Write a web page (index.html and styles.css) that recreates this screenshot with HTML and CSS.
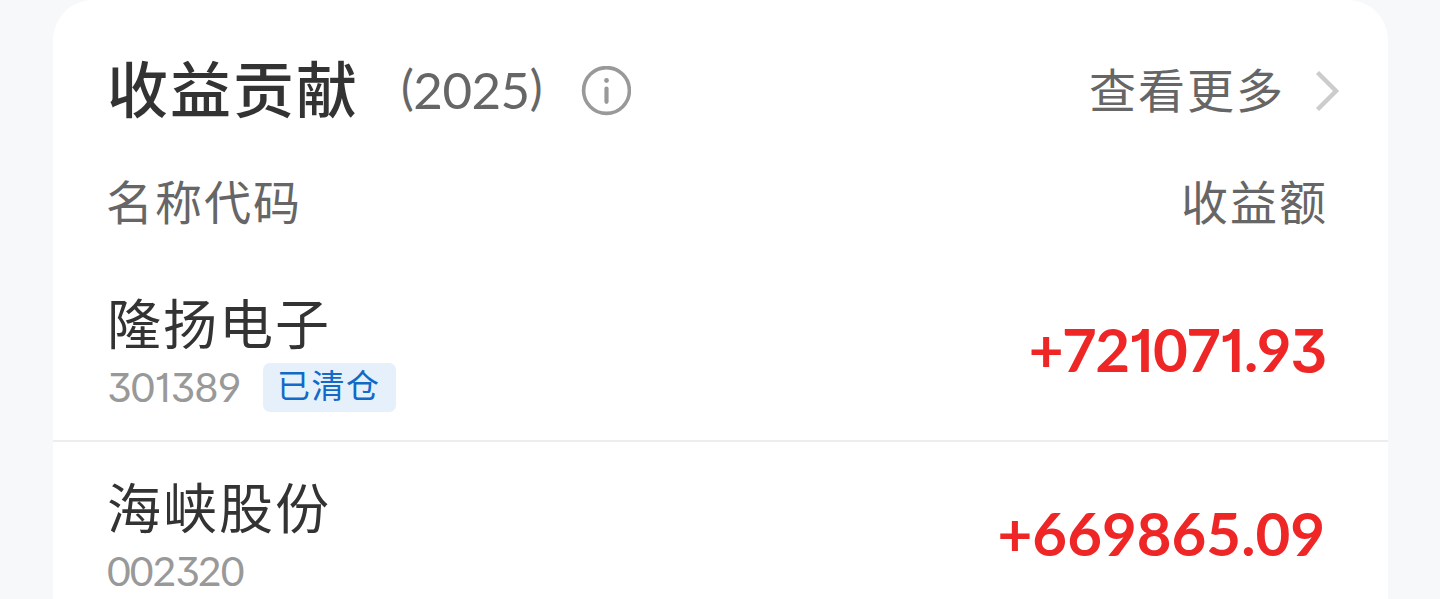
FILE: index.html
```
<!DOCTYPE html>
<html lang="zh-CN">
<head>
<meta charset="utf-8">
<title>收益贡献</title>
<link rel="stylesheet" href="styles.css">
</head>
<body>
<main class="card">
  <header class="head">
    <h1 class="title">收益贡献</h1>
    <span class="year"><span class="paren">(</span>2025<span class="paren">)</span></span>
    <svg class="info" viewBox="0 0 50 50" width="50" height="50" fill="none" stroke="#999" aria-hidden="true">
      <circle cx="25.5" cy="24.5" r="22.9" stroke-width="3.6"/>
      <path d="M25.500 22.5V35.800" stroke-width="4.2" stroke-linecap="round"/>
      <circle cx="25.5" cy="14.5" r="2.4" fill="#999" stroke="none"/>
    </svg>
    <a class="more">查看更多</a>
    <svg class="chevron" viewBox="0 0 26 42" width="26" height="42" fill="none" stroke="#ccc" stroke-width="4.5" aria-hidden="true">
      <path d="M2.500 2.500L21 21L2.500 39.500"/>
    </svg>
  </header>
  <div class="columns"><span>名称代码</span><span>收益额</span></div>
  <section class="row">
    <div class="stock">
      <div class="name">隆扬电子</div>
      <div class="meta"><span class="code code-narrow"><span class="flat">3</span>0<span class="one">1</span><span class="flat">3</span>89</span><span class="badge">已清仓</span></div>
    </div>
    <div class="amount">+72<span class="one">1</span>07<span class="one">1</span>.9<span class="flat">3</span></div>
  </section>
  <section class="row">
    <div class="stock">
      <div class="name">海峡股份</div>
      <div class="meta"><span class="code">002<span class="flat">3</span>20</span></div>
    </div>
    <div class="amount amount-wide">+669865.09</div>
  </section>
</main>
</body>
</html>
```
FILE: styles.css
```
* { box-sizing: border-box; }
body {
  margin: 0;
  background: #f7f8fa;
  font-family: Lato, "Noto Sans CJK SC", sans-serif;
  color: #333;
}
.card {
  width: 1335px;
  height: 599px;
  margin-left: 53px;
  overflow: hidden;
  background: #fff;
  border-radius: 40px 40px 0 0;
}
.head {
  display: flex;
  align-items: center;
  height: 181px;
  padding: 0 47px 0 54px;
  white-space: nowrap;
}
.title {
  margin: 0;
  width: 292px;
  padding-bottom: 1px;
  font-size: 61px;
  font-weight: 500;
  line-height: 80px;
  letter-spacing: 2px;
}
.year {
  width: 182px;
  padding: 0 0 1px 2px;
  font-size: 51px;
  line-height: 64px;
  letter-spacing: -0.500px;
  color: #666;
}
.paren { font-size: 48px; vertical-align: 4px; line-height: 1; }
.info { flex: none; }
.more {
  margin-left: auto;
  padding-bottom: 1px;
  font-size: 47px;
  line-height: 64px;
  letter-spacing: 2px;
  color: #666;
}
.chevron { flex: none; margin-left: 30px; }
.columns {
  display: flex;
  align-items: center;
  justify-content: space-between;
  height: 44px;
  padding: 0 60px 0 53px;
  font-size: 47px;
  line-height: 42px;
  letter-spacing: 2px;
  color: #666;
}
.columns span { padding-bottom: 2px; }
.row {
  display: flex;
  align-items: center;
  justify-content: space-between;
  height: 184px;
  padding: 0 64px 0 54px;
  border-bottom: 2px solid #ededed;
}
.columns + .row { height: 217px; padding-top: 33px; }
.row + .row { border-bottom: 0; padding-bottom: 2px; }
.stock { display: flex; flex-direction: column; }
.name {
  height: 76px;
  font-size: 54px;
  line-height: 78px;
  letter-spacing: 2px;
}
.meta { display: flex; align-items: center; height: 50px; }
.code {
  width: 156px;
  font-size: 41px;
  line-height: 50px;
  letter-spacing: -1px;
  color: #999;
}
.code-narrow { letter-spacing: -0.500px; }
.code-narrow .flat { letter-spacing: -0.020em; }
.badge {
  width: 133px;
  height: 49px;
  padding-left: 14px;
  border-radius: 7px;
  background: #e5f0fb;
  color: #1269c7;
  font-size: 33px;
  line-height: 44px;
  letter-spacing: 1.500px;
}
.amount {
  padding-bottom: 1px;
  font-size: 60px;
  font-weight: 700;
  line-height: 72px;
  letter-spacing: -1.500px;
  color: #ee2626;
}
.amount-wide { margin-right: -1px; letter-spacing: 0; }
.flat, .one {
  font-family: Inter, Lato, sans-serif;
  font-size: 0.98em;
  line-height: 1;
  font-feature-settings: "cv09", "cv01";
  letter-spacing: -0.060em;
}
.one { letter-spacing: 0; }
.amount .flat, .amount .one { font-weight: 600; }
```
